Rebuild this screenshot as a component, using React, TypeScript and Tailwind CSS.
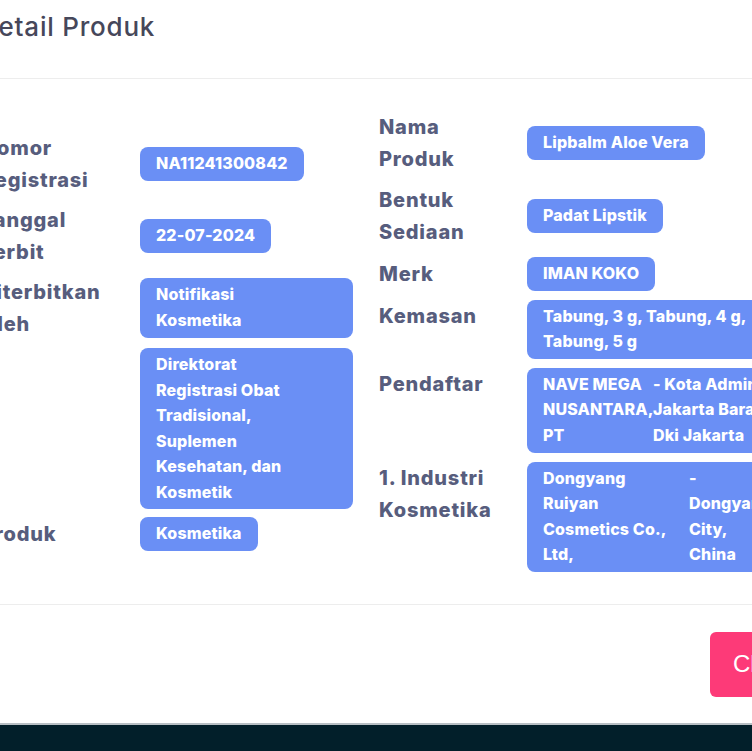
import React from "react";

type RowProps = {
  label: string[];
  lines?: string[];
  cols?: { w: string; lines: string[] }[];
  top?: boolean;
  labelW: string;
  full?: boolean;
};

function Pill({ lines, cols, full }: { lines?: string[]; cols?: RowProps["cols"]; full?: boolean }) {
  return (
    <div
      className={`${full ? "w-full" : "w-fit"} rounded-lg bg-[#6a8ff5] px-4 py-1 text-[16px] font-extrabold leading-[25.6px] tracking-[0.01em] text-white whitespace-nowrap`}
    >
      {cols ? (
        <div className="flex">
          {cols.map((c, i) => (
            <div key={i} className={`${c.w} shrink-0`}>
              {c.lines.map((l, j) => <div key={j}>{l}</div>)}
            </div>
          ))}
        </div>
      ) : (
        lines?.map((l, j) => <div key={j}>{l}</div>)
      )}
    </div>
  );
}

function Row({ label, lines, cols, top, labelW, full }: RowProps) {
  return (
    <div className={`flex ${top ? "items-start" : "items-center"}`}>
      <div className={`${labelW} shrink-0 text-[20px] font-extrabold leading-[32px] tracking-[0.04em] text-[#575d7d] whitespace-nowrap`}>
        {label.map((l, i) => <div key={i}>{l}</div>)}
      </div>
      <div className="flex-1">
        <Pill lines={lines} cols={cols} full={full} />
      </div>
    </div>
  );
}

export default function App() {
  const L = "w-[159px]";
  const R = "w-[148px]";
  return (
    <div className="flex h-[751px] w-[752px] flex-col overflow-hidden bg-white font-['Inter','Noto_Sans',sans-serif]">
      <div className="flex h-[723px] shrink-0 flex-col">
        {/* header */}
        <div className="h-[79px] shrink-0 border-b border-[#ededed]">
          <h2 className="-ml-[21px] pt-[9px] text-[26px] font-medium leading-[36px] tracking-[0.03em] text-[#46475a]">Detail Produk</h2>
        </div>

        {/* body */}
        <div className="flex h-[526px] shrink-0 items-center gap-[26px] border-b border-[#ededed] -ml-[19px]">
          <div className="flex w-[372px] shrink-0 flex-col gap-2">
            <Row labelW={L} label={["Nomor", "Registrasi"]} lines={["NA11241300842"]} />
            <Row labelW={L} label={["Tanggal", "Terbit"]} lines={["22-07-2024"]} />
            <Row labelW={L} label={["Diterbitkan", "Oleh"]} lines={["Notifikasi", "Kosmetika"]} full />
            <Row
              labelW={L}
              label={[""]}
              lines={["Direktorat", "Registrasi Obat", "Tradisional,", "Suplemen", "Kesehatan, dan", "Kosmetik"]}
              full
            />
            <Row labelW={L} label={["Produk"]} lines={["Kosmetika"]} />
          </div>

          <div className="flex w-[428px] shrink-0 flex-col gap-[9px]">
            <Row labelW={R} label={["Nama", "Produk"]} lines={["Lipbalm Aloe Vera"]} />
            <Row labelW={R} label={["Bentuk", "Sediaan"]} lines={["Padat Lipstik"]} />
            <Row labelW={R} label={["Merk"]} lines={["IMAN KOKO"]} />
            <Row labelW={R} top label={["Kemasan"]} lines={["Tabung, 3 g, Tabung, 4 g,", "Tabung, 5 g"]} full />
            <Row
              labelW={R}
              top
              label={["Pendaftar"]}
              full
              cols={[
                { w: "w-[110px]", lines: ["NAVE MEGA", "NUSANTARA,", "PT"] },
                { w: "w-[180px]", lines: ["- Kota Administrasi", "Jakarta Barat,", "Dki Jakarta"] },
              ]}
            />
            <Row
              labelW={R}
              top
              label={["1. Industri", "Kosmetika"]}
              full
              cols={[
                { w: "w-[146px]", lines: ["Dongyang", "Ruiyan", "Cosmetics Co.,", "Ltd,"] },
                { w: "w-[90px]", lines: ["-", "Dongyang", "City,", "China"] },
              ]}
            />
          </div>
        </div>

        {/* footer */}
        <div className="flex flex-1 items-center">
          <div className="ml-[710px] shrink-0">
            <button className="h-[65px] rounded-md bg-[#fd3a78] px-[23px] font-['Liberation_Sans',sans-serif] text-[24px] text-white">
              Close
            </button>
          </div>
        </div>
      </div>
      <div className="h-[2px] shrink-0 bg-[#b8bfc4]" />
      <div className="flex-1 bg-[#021f2a]" />
    </div>
  );
}
